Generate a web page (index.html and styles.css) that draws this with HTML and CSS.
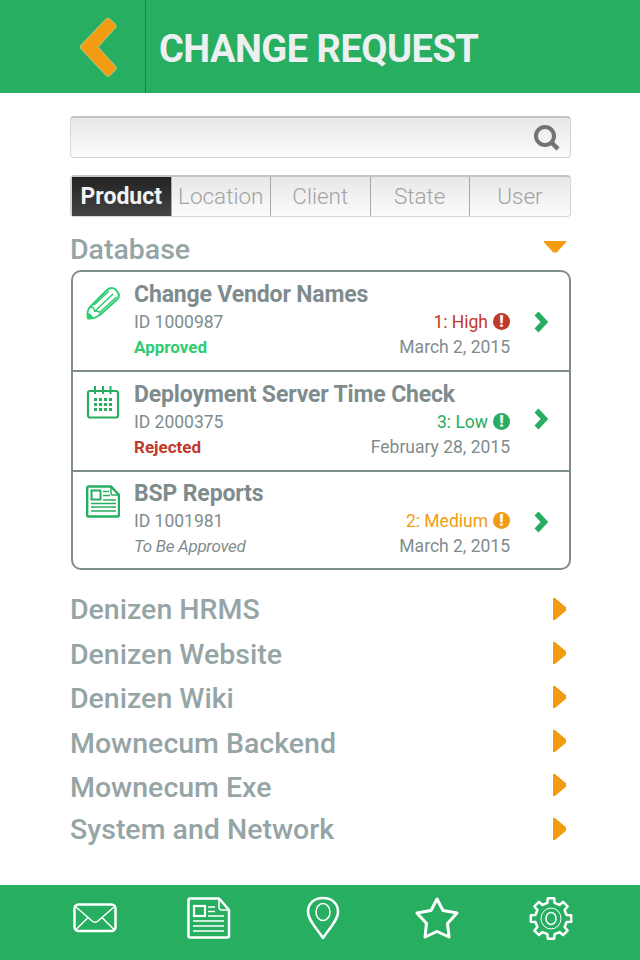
FILE: index.html
```html
<!DOCTYPE html>
<html lang="en">
<head>
    <meta charset="UTF-8">
    <meta name="viewport" content="width=device-width, initial-scale=1.0">
    <title>Change Request</title>
    <link rel="stylesheet" href="styles.css">
</head>
<body>

    <div id="container">
        <header class="topBar">
            <div class="backCell">
                <svg class="backIcon" width="40" height="62" viewBox="0 0 40 62">
                    <path d="M4.500 31 L29 5.500 L34 10 L15 31 L34 52 L29 57 Z" fill="#a5cf8f" stroke="#a5cf8f" stroke-width="7" stroke-linejoin="round"/>
                    <path d="M4.500 31 L29 5.500 L34 10 L15 31 L34 52 L29 57 Z" fill="#f39c12" stroke="#f39c12" stroke-width="5.500" stroke-linejoin="round"/>
                </svg>
            </div>
            <h1>CHANGE REQUEST</h1>
        </header>

        <main class="content">
            <div class="searchBox">
                <svg width="28" height="28" viewBox="0 0 28 28">
                    <circle cx="12" cy="12" r="9" fill="none" stroke="#737373" stroke-width="4"/>
                    <path d="M18.500 18.500 L25 25" stroke="#737373" stroke-width="4.500"/>
                </svg>
            </div>

            <div class="tabs">
                <div class="tab active">Product</div>
                <div class="tab">Location</div>
                <div class="tab">Client</div>
                <div class="tab">State</div>
                <div class="tab">User</div>
            </div>

            <div class="groupHead">
                <h2>Database</h2>
                <span class="arrowDown"></span>
            </div>

            <div class="card">
                <div class="row">
                    <svg class="rowIcon" width="34" height="34" viewBox="0 0 34 34" fill="none" stroke="#2ecc71" stroke-width="2" stroke-linejoin="round">
                        <path d="M2 32.500 C1 28 1.500 24 3.500 21.500 L21 4 C24 1.500 27 1.500 29.500 3.500 L31.500 6 C33.500 8.500 33.500 11 31 13.500 L14.500 28.500 C11 31 6.500 33 2 32.500 Z"/>
                        <path d="M3.500 21.500 C7 20.500 8.500 22 8.500 25.500 C11.500 24.500 14 25.500 14.500 28.500 M8.500 25.500 L27 8 M8 19 L23 5 M13 27 L30.500 11" stroke-width="1.500"/>
                        <path d="M2 32.500 C1.500 30.500 1.500 29 2.500 27 C4.500 27.500 6.500 29.500 7 31.500 C5.500 32.500 3.500 32.700 2 32.500 Z" fill="#2ecc71" stroke="none"/>
                    </svg>
                    <div class="rowMain">
                        <div class="rowTitle">Change Vendor Names</div>
                        <div class="rowLine">
                            <span>ID 1000987</span>
                            <span class="priority high">1: High <i class="alert">!</i></span>
                        </div>
                        <div class="rowLine">
                            <span class="status approved">Approved</span>
                            <span>March 2, 2015</span>
                        </div>
                    </div>
                    <svg class="go" width="16" height="22" viewBox="0 0 16 22"><path d="M3.500 2.500 L11.500 11 L3.500 19.500" fill="none" stroke="#27ae60" stroke-width="5.500"/></svg>
                </div>

                <div class="row">
                    <svg class="rowIcon" width="34" height="34" viewBox="0 0 34 34" fill="none" stroke="#27ae60" stroke-width="2.200">
                        <rect x="2" y="5" width="30" height="26.500" rx="2"/>
                        <path d="M9 0 V8 M17 0 V8 M24.500 0 V8" stroke-width="2"/>
                        <path d="M8 13.500 H27 M8 18.500 H27 M8 23.500 H27" stroke-width="3" stroke-dasharray="3 2"/>
                    </svg>
                    <div class="rowMain">
                        <div class="rowTitle">Deployment Server Time Check</div>
                        <div class="rowLine">
                            <span>ID 2000375</span>
                            <span class="priority low">3: Low <i class="alert">!</i></span>
                        </div>
                        <div class="rowLine">
                            <span class="status rejected">Rejected</span>
                            <span>February 28, 2015</span>
                        </div>
                    </div>
                    <svg class="go goHigher" width="16" height="22" viewBox="0 0 16 22"><path d="M3.500 2.500 L11.500 11 L3.500 19.500" fill="none" stroke="#27ae60" stroke-width="5.500"/></svg>
                </div>

                <div class="row lastRow">
                    <svg class="rowIcon" width="34" height="34" viewBox="0 0 34 34" fill="none" stroke="#27ae60" stroke-width="2.400">
                        <path d="M2.500 1.500 H25 L33 10 V30 Q33 31.500 31.500 31.500 H2.500 Q1.200 31.500 1.200 30 V3 Q1.200 1.500 2.500 1.500 Z"/>
                        <path d="M25 1.500 V8.500 Q25 10 26.500 10 H33" stroke-width="1.500"/>
                        <rect x="5.500" y="5.500" width="9" height="9" stroke-width="2"/>
                        <path d="M17 6.500 H23 M17 10.500 H24 M17 15 H30 M5 18.500 H30 M5 22 H30 M5 26 H30" stroke-width="1.400"/>
                    </svg>
                    <div class="rowMain">
                        <div class="rowTitle">BSP Reports</div>
                        <div class="rowLine">
                            <span>ID 1001981</span>
                            <span class="priority medium">2: Medium <i class="alert">!</i></span>
                        </div>
                        <div class="rowLine">
                            <span class="status pending">To Be Approved</span>
                            <span>March 2, 2015</span>
                        </div>
                    </div>
                    <svg class="go" width="16" height="22" viewBox="0 0 16 22"><path d="M3.500 2.500 L11.500 11 L3.500 19.500" fill="none" stroke="#27ae60" stroke-width="5.500"/></svg>
                </div>
            </div>

            <ul class="groups">
                <li><span>Denizen HRMS</span><i class="arrowRight"></i></li>
                <li class="nudge1"><span>Denizen Website</span><i class="arrowRight"></i></li>
                <li class="nudge1"><span>Denizen Wiki</span><i class="arrowRight"></i></li>
                <li class="nudge2"><span>Mownecum Backend</span><i class="arrowRight"></i></li>
                <li class="nudge2"><span>Mownecum Exe</span><i class="arrowRight"></i></li>
                <li><span>System and Network</span><i class="arrowRight"></i></li>
            </ul>
        </main>

        <footer class="bottomBar">
            <svg width="44" height="44" viewBox="0 0 44 44" fill="none" stroke="#fff" stroke-width="2.500">
                <rect x="1.500" y="8.500" width="41" height="26.500" rx="4"/>
                <path d="M3 11 L19 25 Q22 27.500 25 25 L41 11 M3 33.500 L15 21.500 M41 33.500 L29 21.500" stroke-width="1.500"/>
            </svg>
            <svg width="44" height="44" viewBox="0 0 44 44" fill="none" stroke="#fff" stroke-width="2.500">
                <path d="M3 2.500 H32 L42 14 V40 Q42 41.500 40.500 41.500 H3 Q1.500 41.500 1.500 40 V4 Q1.500 2.500 3 2.500 Z"/>
                <path d="M32 2.500 V11 Q32 14 35 14 H42" stroke-width="1.500"/>
                <rect x="7" y="10" width="11" height="10" stroke-width="2.200"/>
                <path d="M21 11 H28 M21 15.500 H28 M21 20 H37 M6 25 H37 M6 30 H37 M6 35 H37" stroke-width="1.500"/>
            </svg>
            <svg width="36" height="44" viewBox="0 0 36 44" fill="none" stroke="#fff" stroke-width="2.500" stroke-linejoin="round">
                <path d="M18 42 C12 33 3 24 3 16 C3 7 9.500 2 18 2 C26.500 2 33 7 33 16 C33 24 24 33 18 42 Z"/>
                <ellipse cx="18" cy="16" rx="7" ry="8.500" stroke-width="1.500"/>
            </svg>
            <svg width="44" height="44" viewBox="0 0 44 44" fill="none" stroke="#fff" stroke-width="3" stroke-linejoin="round">
                <path d="M22 3 L28 14.500 L42 17 L32.500 27.500 L34 41 L22 35.500 L10 41 L11.500 27.500 L2 17 L16 14.500 Z"/>
            </svg>
            <svg width="44" height="44" viewBox="0 0 44 44" fill="none" stroke="#fff" stroke-width="2.500" stroke-linejoin="round">
                <g transform="translate(22 22.500)">
                    <path d="M-3.600 -15.600 L-3.200 -20.200 L3.200 -20.200 L3.600 -15.600 L8.480 -13.570 L12.050 -16.580 L16.580 -12.050 L13.570 -8.480 L15.600 -3.600 L20.200 -3.200 L20.200 3.200 L15.600 3.600 L13.570 8.480 L16.580 12.050 L12.050 16.580 L8.480 13.570 L3.600 15.600 L3.200 20.200 L-3.200 20.200 L-3.600 15.600 L-8.480 13.570 L-12.050 16.580 L-16.580 12.050 L-13.570 8.480 L-15.600 3.600 L-20.200 3.200 L-20.200 -3.200 L-15.600 -3.600 L-13.570 -8.480 L-16.580 -12.050 L-12.050 -16.580 L-8.480 -13.570 Z"/>
                    <ellipse rx="10" ry="10.500" stroke-width="1"/>
                    <ellipse rx="5" ry="6" stroke-width="1.500"/>
                </g>
            </svg>
        </footer>
    </div>

</body>
</html>
```

FILE: styles.css
```css
body {
    font-family: Roboto, "Noto Sans", sans-serif;
    background-color: #fff;
    margin: 0;
    padding: 0;
}

#container {
    width: 640px;
    height: 960px;
    display: flex;
    flex-direction: column;
}

.topBar {
    height: 93px;
    background-color: #27ae60;
    display: flex;
    align-items: stretch;
}

.backCell {
    width: 145px;
    border-right: 1px solid #1c7f45;
    display: flex;
    align-items: center;
    justify-content: flex-end;
}

.backIcon {
    margin: 1px 26px 0 0;
}

h1 {
    margin: 0 0 0 13px;
    color: #ecf0f1;
    font-size: 38px;
    line-height: 99px;
    font-weight: 700;
    letter-spacing: -0.5px;
}

.content {
    flex: 1;
    padding: 23px 69px 0 70px;
}

.searchBox {
    height: 42px;
    box-sizing: border-box;
    border: 1px solid #d6d6d6;
    border-top: 2px solid #c4c4c4;
    border-radius: 4px;
    background: linear-gradient(#e8e8e8, #fbfbfb);
    display: flex;
    align-items: center;
    justify-content: flex-end;
    padding-right: 9px;
}

.tabs {
    height: 42px;
    box-sizing: border-box;
    margin-top: 17px;
    border: 1px solid #d6d6d6;
    border-top: 2px solid #c4c4c4;
    border-left-width: 2px;
    border-radius: 4px;
    background: linear-gradient(#e8e8e8, #fbfbfb);
    display: flex;
}

.tab {
    flex: none;
    width: 99.500px;
    box-sizing: border-box;
    border-right: 1px solid #a8a8a8;
    color: #a3a3a3;
    font-size: 22.500px;
    font-weight: 300;
    text-align: center;
    line-height: 39px;
}

.tab:last-child {
    flex: 1;
    border-right: none;
}

.tab.active {
    background: linear-gradient(#222, #444);
    color: #f2f2f2;
    font-weight: 700;
    font-size: 23px;
}

.groupHead {
    display: flex;
    justify-content: space-between;
    align-items: center;
    height: 41px;
    padding-top: 12px;
}

h2 {
    margin: 0;
    color: #95a5a6;
    font-size: 28.500px;
    font-weight: 500;
}

.arrowDown {
    width: 22px;
    height: 12px;
    background-color: #f39c12;
    clip-path: polygon(0 0, 100% 0, 100% 15%, 58% 100%, 42% 100%, 0 15%);
    margin: 0 5px 6px 0;
}

.card {
    margin-left: 1px;
    border: 2px solid #7f8c8d;
    border-radius: 10px;
    box-sizing: border-box;
    height: 300px;
}

.row {
    height: 100px;
    box-sizing: border-box;
    border-bottom: 2px solid #7f8c8d;
    display: flex;
    align-items: flex-start;
    padding: 9px 20px 0 13px;
}

.lastRow {
    border-bottom: none;
    padding-top: 8px;
}

.rowIcon {
    flex: none;
    margin-top: 5px;
}

.rowMain {
    flex: 1;
    margin-left: 14px;
    margin-right: 23px;
}

.rowTitle {
    color: #7f8c8d;
    font-size: 23px;
    font-weight: 700;
    line-height: 28px;
    letter-spacing: -0.15px;
}

.rowLine {
    display: flex;
    justify-content: space-between;
    align-items: center;
    height: 25px;
    color: #7f8c8d;
    font-size: 17.500px;
}

.status.approved {
    color: #2ecc71;
    font-size: 17px;
    font-weight: 700;
}

.status.rejected {
    color: #c0392b;
    font-size: 17px;
    font-weight: 700;
}

.status.pending {
    font-size: 17px;
    font-style: italic;
    letter-spacing: -0.3px;
}

.priority {
    display: flex;
    align-items: center;
    gap: 5px;
}

.priority.high {
    color: #c0392b;
}

.priority.low {
    color: #27ae60;
}

.priority.medium {
    color: #f39c12;
}

.alert {
    width: 17px;
    height: 17px;
    border-radius: 50%;
    color: #fff;
    font-style: normal;
    font-size: 16px;
    font-weight: 900;
    line-height: 17px;
    text-align: center;
}

.high .alert {
    background-color: #c0392b;
}

.low .alert {
    background-color: #27ae60;
}

.medium .alert {
    background-color: #f39c12;
}

.go {
    flex: none;
    margin-top: 30px;
}

.lastRow .go {
    margin-top: 31px;
}

.goHigher {
    margin-top: 27px;
}

.groups {
    list-style-type: none;
    margin: 17px 0 0;
    padding: 0;
}

.groups li {
    height: 44px;
    display: flex;
    justify-content: space-between;
    align-items: center;
    color: #95a5a6;
    font-size: 28.500px;
    font-weight: 500;
}

.groups li.nudge1 span {
    margin-top: 2px;
}

.groups li.nudge2 span {
    margin-top: 4px;
}

.arrowRight {
    width: 13px;
    height: 22px;
    background-color: #f39c12;
    clip-path: polygon(0 0, 15% 0, 100% 42%, 100% 58%, 15% 100%, 0 100%);
    margin-right: 5px;
}

.bottomBar {
    height: 75px;
    box-sizing: border-box;
    background-color: #27ae60;
    display: grid;
    grid-template-columns: repeat(5, 114px);
    justify-items: center;
    align-items: start;
    padding: 11px 0 0 38px;
}
```
